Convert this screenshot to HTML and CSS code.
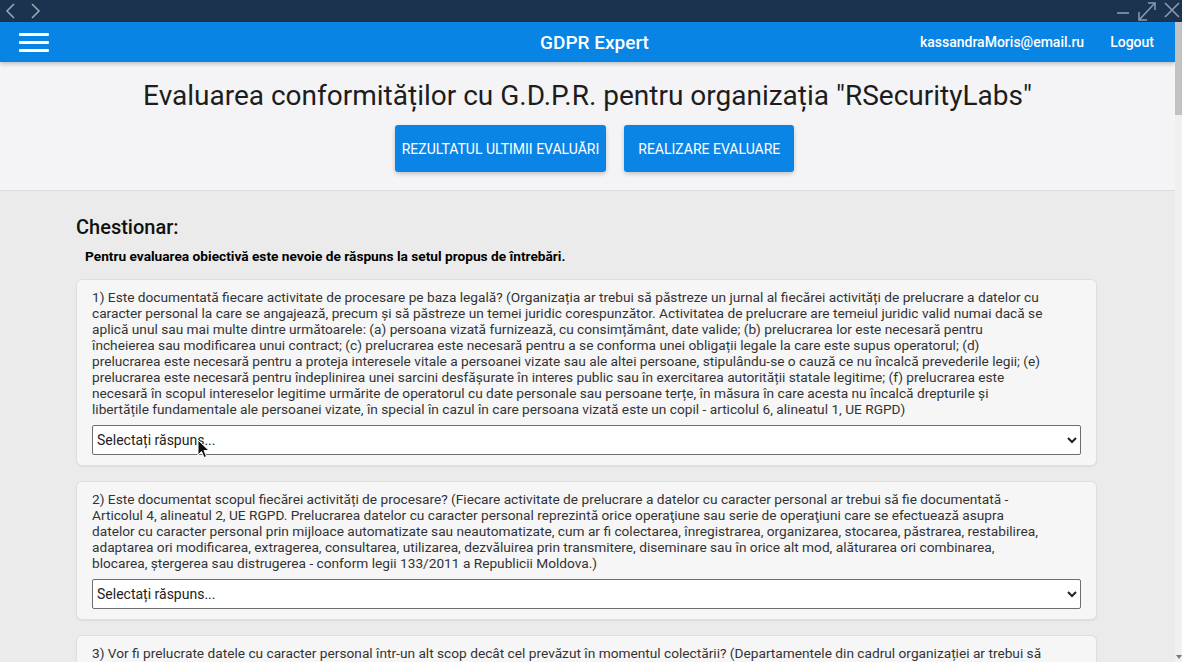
FILE: index.html
```html
<!DOCTYPE html>
<html lang="ro">
<head>
<meta charset="utf-8">
<title>GDPR Expert</title>
<link rel="stylesheet" href="styles.css">
</head>
<body>
<div class="chrome">
  <div class="chrome-nav">
    <svg class="chrome-icon" width="12" height="18" viewBox="0 0 12 18"><path d="M10 2 L3 9 L10 16" fill="none" stroke="#9aa6b4" stroke-width="1.6"/></svg>
    <svg class="chrome-icon" width="12" height="18" viewBox="0 0 12 18"><path d="M2 2 L9 9 L2 16" fill="none" stroke="#9aa6b4" stroke-width="1.6"/></svg>
  </div>
  <div class="chrome-ctrl">
    <svg width="14" height="20" viewBox="0 0 14 20"><path d="M1 12 H13" stroke="#8d9aab" stroke-width="1.6"/></svg>
    <svg width="18" height="20" viewBox="0 0 18 20"><path d="M2 18 L16 3 M10 2 H17 V9 M1 11 V19 H9" fill="none" stroke="#8d9aab" stroke-width="1.5"/></svg>
    <svg width="16" height="20" viewBox="0 0 16 20"><path d="M1 2 L15 16 M15 2 L1 16" stroke="#8d9aab" stroke-width="1.6"/></svg>
  </div>
</div>
<div class="viewport">
  <div class="page">
    <header class="topbar">
      <div class="burger"><span></span><span></span><span></span></div>
      <div class="brand">GDPR Expert</div>
      <div class="user">
        <span>kassandraMoris@email.ru</span>
        <span>Logout</span>
      </div>
    </header>
    <section class="hero">
      <h1 class="hero-title">Evaluarea conformităților cu G.D.P.R. pentru organizația "RSecurityLabs"</h1>
      <div class="hero-actions">
        <button class="btn">REZULTATUL ULTIMII EVALUĂRI</button>
        <button class="btn">REALIZARE EVALUARE</button>
      </div>
    </section>
    <main class="content">
      <h2 class="q-title">Chestionar:</h2>
      <p class="q-sub">Pentru evaluarea obiectivă este nevoie de răspuns la setul propus de întrebări.</p>

      <div class="card">
        <p class="q-text">1) Este documentată fiecare activitate de procesare pe baza legală? (Organizația ar trebui să păstreze un jurnal al fiecărei activități de prelucrare a datelor cu caracter personal la care se angajează, precum și să păstreze un temei juridic corespunzător. Activitatea de prelucrare are temeiul juridic valid numai dacă se aplică unul sau mai multe dintre următoarele: (a) persoana vizată furnizează, cu consimțământ, date valide; (b) prelucrarea lor este necesară pentru încheierea sau modificarea unui contract; (c) prelucrarea este necesară pentru a se conforma unei obligații legale la care este supus operatorul; (d) prelucrarea este necesară pentru a proteja interesele vitale a persoanei vizate sau ale altei persoane, stipulându-se o cauză ce nu încalcă prevederile legii; (e) prelucrarea este necesară pentru îndeplinirea unei sarcini desfășurate în interes public sau în exercitarea autorității statale legitime; (f) prelucrarea este necesară în scopul intereselor legitime urmărite de operatorul cu date personale sau persoane terțe, în măsura în care acesta nu încalcă drepturile și libertățile fundamentale ale persoanei vizate, în special în cazul în care persoana vizată este un copil - articolul 6, alineatul 1, UE RGPD)</p>
        <select class="answer"><option>Selectați răspuns...</option><option>Da</option><option>Nu</option></select>
      </div>

      <div class="card">
        <p class="q-text">2) Este documentat scopul fiecărei activități de procesare? (Fiecare activitate de prelucrare a datelor cu caracter personal ar trebui să fie documentată - Articolul 4, alineatul 2, UE RGPD. Prelucrarea datelor cu caracter personal reprezintă orice operaţiune sau serie de operaţiuni care se efectuează asupra datelor cu caracter personal prin mijloace automatizate sau neautomatizate, cum ar fi colectarea, înregistrarea, organizarea, stocarea, păstrarea, restabilirea, adaptarea ori modificarea, extragerea, consultarea, utilizarea, dezvăluirea prin transmitere, diseminare sau în orice alt mod, alăturarea ori combinarea, blocarea, ştergerea sau distrugerea - conform legii 133/2011 a Republicii Moldova.)</p>
        <select class="answer"><option>Selectați răspuns...</option><option>Da</option><option>Nu</option></select>
      </div>

      <div class="card">
        <p class="q-text">3) Vor fi prelucrate datele cu caracter personal într-un alt scop decât cel prevăzut în momentul colectării? (Departamentele din cadrul organizației ar trebui să cunoască scopurile pentru care sunt colectate datele cu caracter personal și să nu le prelucreze în alte scopuri incompatibile.)</p>
        <select class="answer"><option>Selectați răspuns...</option><option>Da</option><option>Nu</option></select>
      </div>
    </main>
    <svg class="cursor" width="13" height="20" viewBox="0 0 13 20"><path d="M1 1 L1 16 L4.5 12.5 L7 18.5 L9.5 17.5 L7 11.5 L12 11.5 Z" fill="#111" stroke="#fff" stroke-width="1"/></svg>
  </div>
  <div class="scrollbar">
    <div class="thumb"></div>
    <div class="track"></div>
    <div class="arrow"></div>
  </div>
</div>
</body>
</html>
```
FILE: styles.css
```css
* { box-sizing: border-box; }
html, body { margin: 0; padding: 0; }
body {
  width: 1182px;
  height: 662px;
  overflow: hidden;
  font-family: Roboto, "Liberation Sans", sans-serif;
  background: #ebebeb;
  color: #222;
}
.chrome {
  height: 22px;
  background: #1c3350;
  display: flex;
  justify-content: space-between;
  align-items: center;
}
.chrome-nav { display: flex; gap: 14px; padding-left: 4px; }
.chrome-ctrl { display: flex; gap: 8px; padding-right: 2px; align-items: center; }
.viewport { display: flex; height: 640px; }
.page {
  flex: 1;
  position: relative;
  overflow: hidden;
}
.topbar {
  height: 40px;
  background: #0784e4;
  color: #fff;
  display: grid;
  grid-template-columns: 1fr auto 1fr;
  align-items: center;
  box-shadow: 0 2px 4px rgba(0,0,0,0.22);
  position: relative;
  z-index: 2;
}
.burger {
  display: flex;
  flex-direction: column;
  gap: 5px;
  padding-left: 19px;
  width: 49px;
}
.burger span { display: block; width: 30px; height: 3px; background: #fff; border-radius: 1px; }
.brand { font-size: 19px; font-weight: 500; padding-left: 14px; }
.user {
  display: flex;
  justify-content: flex-end;
  gap: 26px;
  padding-right: 21px;
  font-size: 14px;
  font-weight: 500;
}
.hero {
  background: #f4f4f7;
  border-bottom: 1px solid #dcdcdc;
  padding: 18px 0 18px;
  text-align: center;
}
.hero-title {
  margin: 0;
  font-size: 28px;
  line-height: 32px;
  font-weight: 400;
  color: #1d1d1d;
}
.hero-actions {
  margin-top: 13px;
  padding-left: 14px;
  display: flex;
  justify-content: center;
  gap: 18px;
}
.btn {
  height: 47px;
  min-width: 170px;
  padding: 0 7px;
  border: none;
  border-radius: 3px;
  background: #0a85e6;
  color: #fff;
  font-family: Roboto, "Liberation Sans", sans-serif;
  font-size: 14px;
  box-shadow: 0 2px 4px rgba(0,0,0,0.2);
}
.content {
  margin: 0 78px 0 76px;
  padding-top: 24px;
}
.q-title {
  margin: 0;
  font-size: 20px;
  line-height: 24px;
  font-weight: 500;
  color: #111;
}
.q-sub {
  margin: 9px 0 15px 9px;
  font-size: 13.7px;
  line-height: 16px;
  font-weight: 700;
  color: #000;
}
.card {
  background: #f6f6f7;
  border: 1px solid #dedede;
  border-radius: 6px;
  padding: 9px 15px 10px;
  margin-bottom: 15px;
  box-shadow: 0 1px 2px rgba(0,0,0,0.06);
}
.q-text {
  margin: 0 36px 0 0;
  font-size: 13.7px;
  line-height: 16px;
  color: #333;
}
.answer {
  display: block;
  width: 100%;
  height: 30px;
  margin-top: 8px;
  font-family: Roboto, "Liberation Sans", sans-serif;
  font-size: 14px;
  color: #222;
  background: #fff;
  border: 1px solid #6e6e6e;
  border-radius: 2px;
  padding: 0;
}
.cursor {
  position: absolute;
  left: 197px;
  top: 417px;
  z-index: 5;
}
.scrollbar {
  width: 7px;
  display: flex;
  flex-direction: column;
  background: #f0f0f0;
}
.thumb { height: 93px; background: #c2c2c2; }
.track { flex: 1; }
.arrow {
  height: 6px;
  width: 0;
  margin: 0 auto 1px;
  border-left: 3px solid transparent;
  border-right: 3px solid transparent;
  border-top: 4px solid #777;
}
```
